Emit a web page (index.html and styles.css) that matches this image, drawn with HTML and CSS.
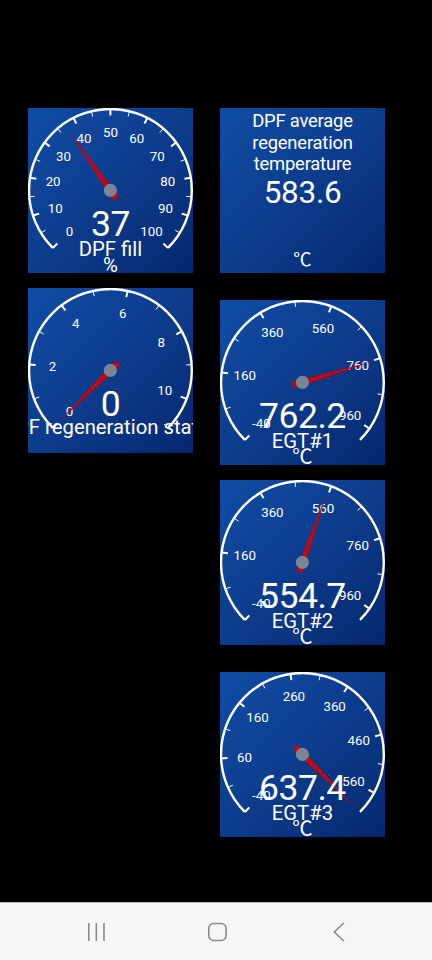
FILE: index.html
```
<!DOCTYPE html>
<html lang="en">
<head>
<meta charset="utf-8">
<title>DPF dashboard</title>
<link rel="stylesheet" href="styles.css">
</head>
<body>
<main class="dashboard">
  <div class="column column-left">
    <svg class="tile gauge" viewBox="0 0 165 165" data-min="0" data-max="100" data-step="5" data-value="37" data-text="37" data-title="DPF fill" data-unit="%"></svg>
    <svg class="tile gauge" viewBox="0 0 165 165" data-min="0" data-max="11" data-step="1" data-value="0" data-text="0" data-title="DPF regeneration status" data-unit="" data-title-x="83.3" data-title-y="145.5"></svg>
  </div>
  <div class="column column-right">
    <section class="tile display">
      <h2 class="display-title">DPF average<br>regeneration<br>temperature</h2>
      <p class="display-value">583.6</p>
      <p class="display-unit">℃</p>
    </section>
    <svg class="tile gauge spaced" viewBox="0 0 165 165" data-min="-40" data-max="1000" data-step="100" data-value="762.2" data-text="762.2" data-title="EGT#1" data-unit="℃"></svg>
    <svg class="tile gauge" viewBox="0 0 165 165" data-min="-40" data-max="1000" data-step="100" data-value="554.7" data-text="554.7" data-title="EGT#2" data-unit="℃"></svg>
    <svg class="tile gauge spaced" viewBox="0 0 165 165" data-min="-40" data-max="600" data-step="50" data-value="637.4" data-text="637.4" data-title="EGT#3" data-unit="℃"></svg>
  </div>
</main>
<nav class="navbar">
  <svg class="nav-icon" viewBox="0 0 24 24"><path d="M4.800 3v18M12.300 3v18M20 3v18"/></svg>
  <svg class="nav-icon" viewBox="0 0 24 24"><rect x="2.800" y="3.500" width="17.300" height="17" rx="5"/></svg>
  <svg class="nav-icon" viewBox="0 0 24 24"><path d="M16.800 3l-9.500 9 9.500 9"/></svg>
</nav>
<script src="gauges.js"></script>
</body>
</html>
```
FILE: styles.css
```
* {
  box-sizing: border-box;
}

body {
  margin: 0;
  height: 960px;
  display: flex;
  flex-direction: column;
  background: #000;
  color: #fff;
  font-family: Roboto, "Noto Sans CJK SC", "Liberation Sans", sans-serif;
  overflow: hidden;
}

.dashboard {
  flex: 1;
  display: flex;
  gap: 27px;
  padding: 108px 28px 0;
}

.column {
  display: flex;
  flex-direction: column;
  gap: 15px;
  width: 165px;
}

.tile {
  display: block;
  flex: none;
  width: 165px;
  height: 165px;
  overflow: hidden;
  background: linear-gradient(135deg, #104da6 0%, #0d3c8c 50%, #05286f 100%);
}

.spaced {
  margin-top: 12px;
}

.arc,
.tick {
  fill: none;
  stroke: #fff;
}

.arc {
  stroke-width: 2.4;
}

.tick-major {
  stroke-width: 2;
}

.tick-minor {
  stroke-width: 1;
}

.gauge text {
  fill: #fff;
  text-anchor: middle;
}

.label {
  font-size: 13.3px;
}

.value {
  font-size: 35.5px;
  letter-spacing: -0.5px;
}

.title,
.unit {
  font-size: 20.3px;
}

.needle {
  fill: #d40000;
}

.hub {
  fill: #778594;
}

.display {
  display: flex;
  flex-direction: column;
  align-items: center;
  padding: 2px 0 3px;
}

.display-title,
.display-value,
.display-unit {
  margin: 0;
  font-weight: 400;
  text-align: center;
}

.display-title {
  font-size: 18.4px;
  line-height: 21.6px;
  letter-spacing: -0.2px;
}

.display-value {
  font-size: 31.5px;
  line-height: 36px;
  letter-spacing: -0.3px;
}

.display-unit {
  margin-top: auto;
  font-size: 18.4px;
  line-height: 20px;
}

.navbar {
  display: flex;
  justify-content: space-between;
  align-items: center;
  height: 58px;
  padding: 1px 81px 0 84px;
  border-top: 1px solid #b5b5b5;
  background: #f6f6f6;
}

.nav-icon {
  width: 24px;
  height: 24px;
  fill: none;
  stroke: #8a8a8a;
  stroke-width: 1.6;
}
```
FILE: gauges.js
```
const NS = "http://www.w3.org/2000/svg";
const CENTER = 82.4;
const RADIUS = 81.400;

function add(parent, tag, attrs, text) {
  const node = document.createElementNS(NS, tag);
  for (const key in attrs) node.setAttribute(key, attrs[key]);
  if (text) node.textContent = text;
  parent.appendChild(node);
}

function point(angle, radius) {
  const a = angle * Math.PI / 180;
  return [CENTER + radius * Math.sin(a), CENTER - radius * Math.cos(a)];
}

document.querySelectorAll(".gauge").forEach((svg) => {
  const d = svg.dataset;
  const min = +d.min, max = +d.max, step = +d.step;
  const angleOf = (v) => -135 + 270 * (Math.min(v, max) - min) / (max - min);

  const start = point(-135, RADIUS), end = point(135, RADIUS);
  add(svg, "path", { class: "arc", d: `M${start} A${RADIUS} ${RADIUS} 0 1 1 ${end}` });

  for (let i = 0, v = min; v <= max; i++, v += step) {
    const major = i % 2 === 0;
    const outer = point(angleOf(v), RADIUS);
    const inner = point(angleOf(v), major ? 75 : 76);
    add(svg, "path", { class: `tick tick-${major ? "major" : "minor"}`, d: `M${outer} L${inner}` });
    if (major) {
      const [x, y] = point(angleOf(v), 58);
      add(svg, "text", { class: "label", x, y: y + 4.4 }, String(v));
    }
  }

  add(svg, "path", {
    class: "needle",
    d: `M${CENTER} ${CENTER - 73} l3.200 83 h-6.400 z`,
    transform: `rotate(${angleOf(+d.value)} ${CENTER} ${CENTER})`
  });
  add(svg, "circle", { class: "hub", cx: CENTER, cy: CENTER, r: 6.6 });
  add(svg, "text", { class: "value", x: 82.4, y: 128 }, d.text);
  add(svg, "text", { class: "title", x: d.titleX || 82.4, y: d.titleY || 147.800 }, d.title);
  if (d.unit) add(svg, "text", { class: "unit", x: 82.4, y: 164 }, d.unit);
});
```
